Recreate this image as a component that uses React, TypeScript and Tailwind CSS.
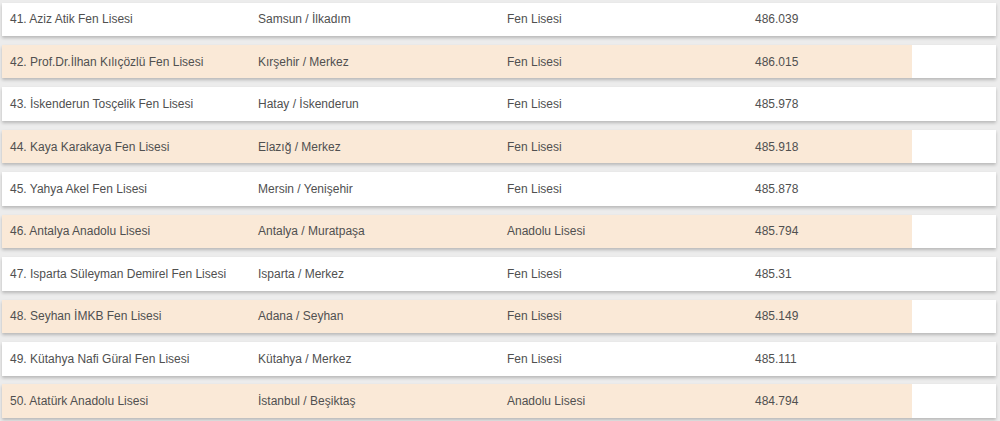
const schools = [
  { name: "41. Aziz Atik Fen Lisesi", city: "Samsun / İlkadım", type: "Fen Lisesi", score: "486.039" },
  { name: "42. Prof.Dr.İlhan Kılıçözlü Fen Lisesi", city: "Kırşehir / Merkez", type: "Fen Lisesi", score: "486.015" },
  { name: "43. İskenderun Tosçelik Fen Lisesi", city: "Hatay / İskenderun", type: "Fen Lisesi", score: "485.978" },
  { name: "44. Kaya Karakaya Fen Lisesi", city: "Elazığ / Merkez", type: "Fen Lisesi", score: "485.918" },
  { name: "45. Yahya Akel Fen Lisesi", city: "Mersin / Yenişehir", type: "Fen Lisesi", score: "485.878" },
  { name: "46. Antalya Anadolu Lisesi", city: "Antalya / Muratpaşa", type: "Anadolu Lisesi", score: "485.794" },
  { name: "47. Isparta Süleyman Demirel Fen Lisesi", city: "Isparta / Merkez", type: "Fen Lisesi", score: "485.31" },
  { name: "48. Seyhan İMKB Fen Lisesi", city: "Adana / Seyhan", type: "Fen Lisesi", score: "485.149" },
  { name: "49. Kütahya Nafi Güral Fen Lisesi", city: "Kütahya / Merkez", type: "Fen Lisesi", score: "485.111" },
  { name: "50. Atatürk Anadolu Lisesi", city: "İstanbul / Beşiktaş", type: "Anadolu Lisesi", score: "484.794" },
];

export default function App() {
  return (
    <div className="h-[421px] w-[1000px] overflow-hidden bg-[#ececec] pl-[2px] pr-[4px] pt-[2.5px] font-['Liberation_Sans',Arial,sans-serif] text-[12px] text-[#505050]">
      <div className="flex flex-col gap-[8.95px]">
        {schools.map((s, i) => {
          const odd = i % 2 === 1;
          return (
            <div
              key={s.name}
              className="flex h-[33.5px] items-center bg-white shadow-[0_2px_3px_rgba(0,0,0,0.22)]"
            >
              <div className={`flex h-full w-[910px] items-center ${odd ? "bg-[#fae9d7]" : "bg-white"}`}>
                <div className="w-[248px] pl-[8px]">{s.name}</div>
                <div className="w-[249px] pl-[8px]">{s.city}</div>
                <div className="w-[248px] pl-[8px]">{s.type}</div>
                <div className="flex-1 pl-[8px]">{s.score}</div>
              </div>
              <div className="flex-1" />
            </div>
          );
        })}
      </div>
    </div>
  );
}
